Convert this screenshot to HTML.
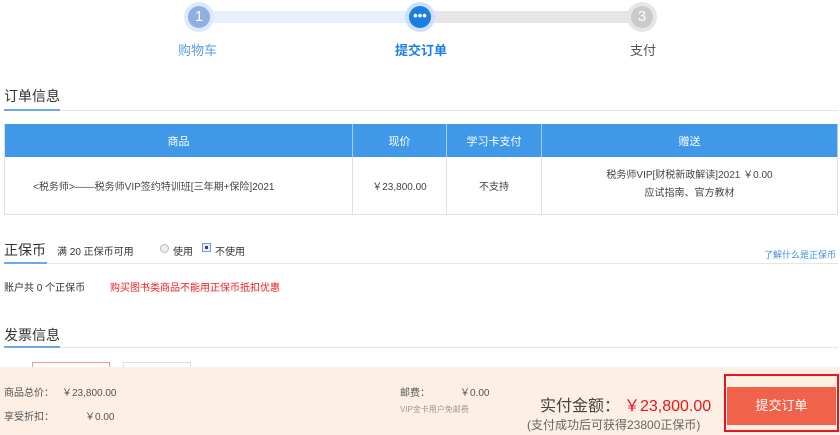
<!DOCTYPE html>
<html><head><meta charset="utf-8"><style>
*{margin:0;padding:0;box-sizing:border-box}
body{width:840px;height:435px;overflow:hidden;background:#fff;font-family:"Liberation Sans","Noto Sans CJK SC",sans-serif;color:#333;position:relative}
.a{position:absolute;white-space:nowrap}
.t11{font-size:11px}.t10{font-size:10px}
.circ{position:absolute;width:30px;height:30px;border-radius:50%}
.circ i{position:absolute;left:4px;top:4px;width:22px;height:22px;border-radius:50%;color:#fff;font-style:normal;font-size:15px;text-align:center;line-height:22px}
th{background:#3f99e8;color:#fff;font-weight:normal;font-size:11px;height:33px;border-right:1px solid #a9cdf2}
td{font-size:10px;color:#444;text-align:center;border-right:1px solid #d4e2f2;height:57px}
table{border-collapse:collapse;position:absolute;left:4px;top:124px;width:834px;border-left:1px solid #d4e2f2;border-bottom:1px solid #d4e2f2}
</style></head><body>
<div class="a" style="left:199px;top:11px;width:221px;height:12px;background:#e8f0fd"></div>
<div class="a" style="left:420px;top:11px;width:222px;height:12px;background:#e6e6e6"></div>
<div class="circ" style="left:184px;top:2px;background:#deeafb"><i style="background:#8eb0e2">1</i></div>
<div class="circ" style="left:405px;top:2px;background:#cfe0fb"><i style="background:#1a7ee2;font-size:13px;line-height:20px;font-weight:bold">•••</i></div>
<div class="circ" style="left:627px;top:2px;background:#e6e6e6"><i style="background:#cacaca">3</i></div>
<div class="a" style="left:178px;top:40px;font-size:13px;color:#5b9de6">购物车</div>
<div class="a" style="left:395px;top:40px;font-size:13px;color:#1a7ee2;font-weight:bold">提交订单</div>
<div class="a" style="left:630px;top:40px;font-size:13px;color:#555">支付</div>

<div class="a" style="left:4px;top:86px;font-size:14px;color:#333">订单信息</div>
<div class="a" style="left:4px;top:110px;width:834px;height:1px;background:#e6e6e6"></div>
<div class="a" style="left:4px;top:109px;width:56px;height:2px;background:#6aa9ea"></div>

<table><tr><th style="width:348px">商品</th><th style="width:94px">现价</th><th style="width:95px">学习卡支付</th><th>赠送</th></tr>
<tr><td style="text-align:left;padding-left:28px">&lt;税务师&gt;——税务师VIP签约特训班[三年期+保险]2021</td><td>￥23,800.00</td><td>不支持</td><td style="line-height:18px">税务师VIP[财税新政解读]2021 ￥0.00<br>应试指南、官方教材</td></tr></table>

<div class="a" style="left:4px;top:240px;font-size:14px">正保币</div>
<div class="a t10" style="left:57px;top:243px">满 20 正保币可用</div>
<div class="a" style="left:160px;top:244px;width:9px;height:9px;border-radius:50%;border:1px solid #bbb;background:#eee"></div>
<div class="a t10" style="left:173px;top:243px">使用</div>
<div class="a" style="left:202px;top:243px;width:9px;height:9px;border:1px solid #6f9fe0;background:#e8f0fb"><div style="margin:2px;width:3px;height:3px;background:#444"></div></div>
<div class="a t10" style="left:215px;top:243px">不使用</div>
<div class="a" style="left:764px;top:248px;font-size:9px;color:#3f8ee0">了解什么是正保币</div>
<div class="a" style="left:4px;top:263px;width:834px;height:1px;background:#e6e6e6"></div>
<div class="a" style="left:4px;top:262px;width:43px;height:2px;background:#6aa9ea"></div>
<div class="a t10" style="left:4px;top:279px">账户共 0 个正保币</div>
<div class="a t10" style="left:110px;top:279px;color:#f02020">购买图书类商品不能用正保币抵扣优惠</div>

<div class="a" style="left:4px;top:325px;font-size:14px">发票信息</div>
<div class="a" style="left:4px;top:347px;width:834px;height:1px;background:#e6e6e6"></div>
<div class="a" style="left:4px;top:346px;width:56px;height:2px;background:#6aa9ea"></div>
<div class="a" style="left:32px;top:362px;width:78px;height:10px;border:1px solid #f29a8a"></div>
<div class="a" style="left:123px;top:362px;width:68px;height:10px;border:1px solid #ddd"></div>

<div class="a" style="left:0;top:367px;width:840px;height:68px;background:#fdefe3"></div>
<div class="a t10" style="left:4px;top:384px;color:#555">商品总价：</div>
<div class="a t10" style="left:62px;top:384px;color:#555">￥23,800.00</div>
<div class="a t10" style="left:4px;top:408px;color:#555">享受折扣：</div>
<div class="a t10" style="left:85px;top:408px;color:#555">￥0.00</div>
<div class="a t10" style="left:400px;top:384px;color:#555">邮费：</div>
<div class="a t10" style="left:460px;top:384px;color:#555">￥0.00</div>
<div class="a" style="left:400px;top:404px;font-size:8px;color:#999">VIP金卡用户免邮费</div>
<div class="a" style="left:540px;top:392px;font-size:16px;color:#444">实付金额：</div>
<div class="a" style="left:624px;top:392px;font-size:16px;color:#e8141e">￥23,800.00</div>
<div class="a" style="left:527px;top:416px;font-size:12px;color:#666">(支付成功后可获得23800正保币)</div>
<div class="a" style="left:724px;top:374px;width:115px;height:58px;border:2px solid #e8141e;background:#fdefe3"></div>
<div class="a" style="left:727px;top:387px;width:109px;height:38px;background:#f0624a;color:#fff;font-size:13px;text-align:center;line-height:38px">提交订单</div>
</body></html>
